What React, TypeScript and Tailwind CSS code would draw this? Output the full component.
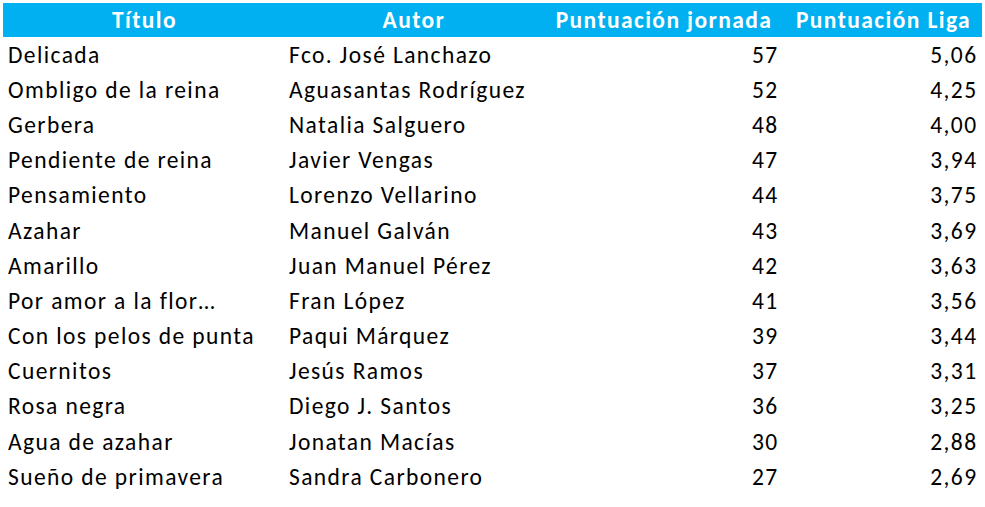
import React from "react";

const rows: [string, string, string, string][] = [
  ["Delicada", "Fco. José Lanchazo", "57", "5,06"],
  ["Ombligo de la reina", "Aguasantas Rodríguez", "52", "4,25"],
  ["Gerbera", "Natalia Salguero", "48", "4,00"],
  ["Pendiente de reina", "Javier Vengas", "47", "3,94"],
  ["Pensamiento", "Lorenzo Vellarino", "44", "3,75"],
  ["Azahar", "Manuel Galván", "43", "3,69"],
  ["Amarillo", "Juan Manuel Pérez", "42", "3,63"],
  ["Por amor a la flor…", "Fran López", "41", "3,56"],
  ["Con los pelos de punta", "Paqui Márquez", "39", "3,44"],
  ["Cuernitos", "Jesús Ramos", "37", "3,31"],
  ["Rosa negra", "Diego J. Santos", "36", "3,25"],
  ["Agua de azahar", "Jonatan Macías", "30", "2,88"],
  ["Sueño de primavera", "Sandra Carbonero", "27", "2,69"],
];

export default function App() {
  return (
    <div className="w-[985px] h-[507px] bg-white pt-[3px] pl-[3px] overflow-hidden font-[Carlito,Calibri,Lato,sans-serif] text-[23.5px] tracking-[1.4px] leading-none">
      <div className="w-[979px] grid grid-cols-[281px_260px_237px_201px]">
        <div className="h-[34px] bg-[#00b0f0] text-white font-bold flex items-center justify-center pt-[2px] pl-[2px]">Título</div>
        <div className="h-[34px] bg-[#00b0f0] text-white font-bold flex items-center justify-center pt-[2px]">Autor</div>
        <div className="h-[34px] bg-[#00b0f0] text-white font-bold flex items-center justify-center pt-[2px] pl-[3px] whitespace-nowrap">Puntuación jornada</div>
        <div className="h-[34px] bg-[#00b0f0] text-white font-bold flex items-center justify-center pt-[2px] pl-[4px] whitespace-nowrap">Puntuación Liga</div>
        {rows.map((r, i) => (
          <React.Fragment key={i}>
            <div className="h-[35.17px] flex items-center pt-[2px] pl-[5px] text-black whitespace-nowrap">{r[0]}</div>
            <div className="h-[35.17px] flex items-center pt-[2px] pl-[5px] text-black whitespace-nowrap">{r[1]}</div>
            <div className="h-[35.17px] flex items-center pt-[2px] justify-end pr-[2.5px] text-black">{r[2]}</div>
            <div className="h-[35.17px] flex items-center pt-[2px] justify-end pr-[4.5px] text-black">{r[3]}</div>
          </React.Fragment>
        ))}
      </div>
    </div>
  );
}
